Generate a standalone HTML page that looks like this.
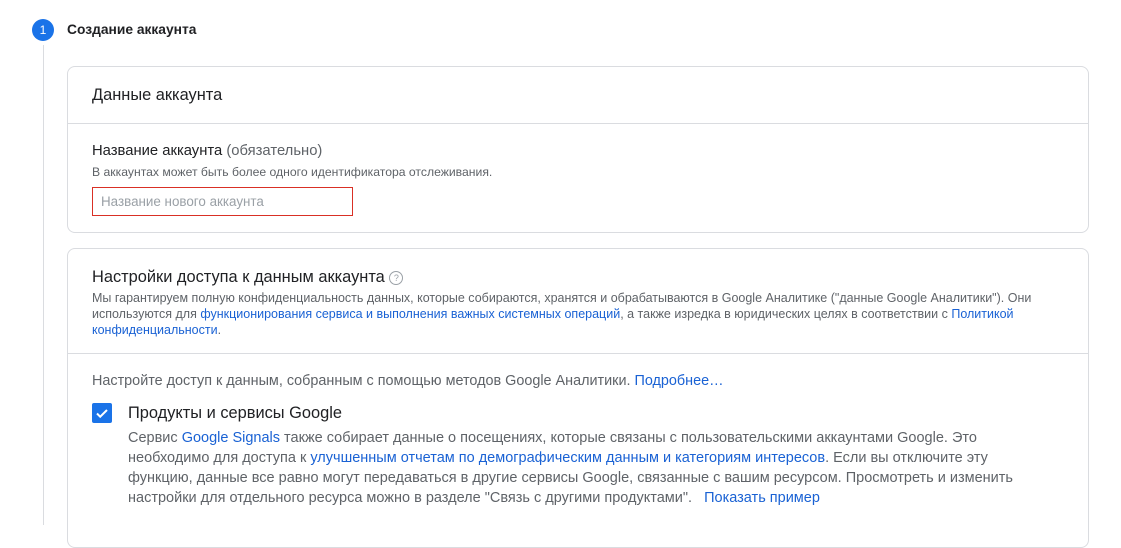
<!DOCTYPE html>
<html><head><meta charset="utf-8"><style>
*{margin:0;padding:0;box-sizing:border-box}
body{width:1121px;height:524px;overflow:hidden;background:#fff;font-family:"Liberation Sans",Arial,sans-serif;color:#202124;position:relative}
.a{position:absolute;white-space:nowrap}
.l{color:#1a62d4}
.g{color:#5f6368}
.card{position:absolute;left:67px;width:1022px;border:1px solid #dadce0;border-radius:8px;background:#fff}
.hr{position:absolute;left:68px;width:1020px;height:1px;background:#dadce0}
</style></head><body>
<div class="a" style="left:32px;top:19px;width:22px;height:22px;border-radius:50%;background:#1a73e8;color:#fff;font-size:12px;text-align:center;line-height:22px">1</div>
<div class="a" style="left:67px;top:22px;font-size:13.8px;font-weight:bold;color:#202124">Создание аккаунта</div>
<div class="a" style="left:43px;top:45px;width:1px;height:480px;background:#dadce0"></div>

<div class="card" style="top:66px;height:167px"></div>
<div class="hr" style="top:123px"></div>
<div class="a" style="left:92px;top:86px;font-size:16.4px">Данные аккаунта</div>
<div class="a" style="left:92px;top:143px;font-size:14.8px">Название аккаунта <span class="g">(обязательно)</span></div>
<div class="a g" style="left:92px;top:165px;font-size:12.2px">В аккаунтах может быть более одного идентификатора отслеживания.</div>
<div class="a" style="left:92px;top:187px;width:261px;height:29px;border:1px solid #d93025"></div>
<div class="a" style="left:101px;top:194px;font-size:13.4px;color:#9aa0a6">Название нового аккаунта</div>

<div class="card" style="top:248px;height:300px"></div>
<div class="hr" style="top:353px"></div>
<div class="a" style="left:92px;top:268px;font-size:16.4px">Настройки доступа к данным аккаунта <span style="display:inline-block;width:14px;height:14px;border:1px solid #9aa0a6;border-radius:50%;font-size:9px;color:#9aa0a6;text-align:center;line-height:12px;vertical-align:1px">?</span></div>
<div class="a g" style="left:92px;top:290px;font-size:12.5px;line-height:16px">Мы гарантируем полную конфиденциальность данных, которые собираются, хранятся и обрабатываются в Google Аналитике ("данные Google Аналитики"). Они<br>используются для <span class="l">функционирования сервиса и выполнения важных системных операций</span>, а также изредка в юридических целях в соответствии с <span class="l">Политикой</span><br><span class="l">конфиденциальности</span>.</div>
<div class="a g" style="left:92px;top:373px;font-size:14.4px">Настройте доступ к данным, собранным с помощью методов Google Аналитики. <span class="l">Подробнее…</span></div>
<div class="a" style="left:92px;top:403px;width:20px;height:20px;background:#1a73e8;border-radius:2px"><svg width="20" height="20"><path d="M5 10.5l3.2 3.2L15 7" stroke="#fff" stroke-width="2" fill="none"/></svg></div>
<div class="a" style="left:128px;top:404px;font-size:16.4px">Продукты и сервисы Google</div>
<div class="a g" style="left:128px;top:428px;font-size:14.5px;line-height:20px">Сервис <span class="l">Google Signals</span> также собирает данные о посещениях, которые связаны с пользовательскими аккаунтами Google. Это<br>необходимо для доступа к <span class="l">улучшенным отчетам по демографическим данным и категориям интересов</span>. Если вы отключите эту<br>функцию, данные все равно могут передаваться в другие сервисы Google, связанные с вашим ресурсом. Просмотреть и изменить<br>настройки для отдельного ресурса можно в разделе "Связь с другими продуктами". &nbsp; <span class="l">Показать пример</span></div>
</body></html>
